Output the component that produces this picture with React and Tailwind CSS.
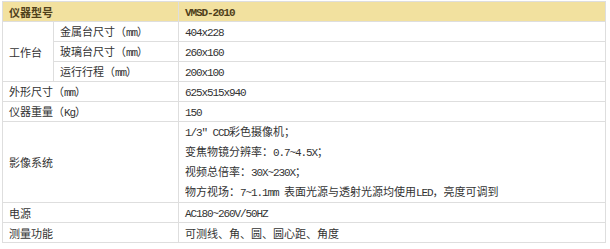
import React from "react";

// ASCII runs are set in a narrow mono face, like SimSun half-width glyphs
function Txt({ children }) {
  const parts = String(children).split(/([\x20-\x7E]+)/);
  return (
    <span>
      {parts.map((p, i) =>
        /^[\x20-\x7E]+$/.test(p) ? (
          <span key={i} className="font-['Liberation_Mono'] tracking-[-1.1px] whitespace-pre">
            {p}
          </span>
        ) : (
          <span key={i}>{p}</span>
        )
      )}
    </span>
  );
}

const cell = "border border-[#dedede] px-[6px] h-[20px] py-0 leading-[12px] align-middle";
const line = "h-[20px] flex items-center leading-[12px]";

export default function App() {
  return (
    <div className="w-[610px] h-[249px] bg-white pt-px pl-[2px] font-['Noto_Sans_CJK_SC',sans-serif] text-[11px] text-[#333]">
      <table className="w-[604px] border-collapse border border-[#dcdcdc] table-fixed">
        <colgroup>
          <col className="w-[51px]" />
          <col className="w-[125px]" />
          <col />
        </colgroup>
        <tbody>
          {/* en-tête */}
          <tr className="bg-[#f2e19f] font-bold text-[#4f401a]">
            <td colSpan={2} className={cell}>
              仪器型号
            </td>
            <td className={cell}>
              <Txt>VMSD-2010</Txt>
            </td>
          </tr>

          <tr>
            <td rowSpan={3} className={cell}>
              工作台
            </td>
            <td className={cell}>
              <Txt>金属台尺寸（mm）</Txt>
            </td>
            <td className={cell}>
              <Txt>404x228</Txt>
            </td>
          </tr>
          <tr>
            <td className={cell}>
              <Txt>玻璃台尺寸（mm）</Txt>
            </td>
            <td className={cell}>
              <Txt>260x160</Txt>
            </td>
          </tr>
          <tr>
            <td className={cell}>
              <Txt>运行行程（mm）</Txt>
            </td>
            <td className={cell}>
              <Txt>200x100</Txt>
            </td>
          </tr>

          <tr>
            <td colSpan={2} className={cell}>
              <Txt>外形尺寸（mm）</Txt>
            </td>
            <td className={cell}>
              <Txt>625x515x940</Txt>
            </td>
          </tr>
          <tr>
            <td colSpan={2} className={cell}>
              <Txt>仪器重量（Kg）</Txt>
            </td>
            <td className={cell}>
              <Txt>150</Txt>
            </td>
          </tr>

          <tr>
            <td colSpan={2} className={cell}>
              影像系统
            </td>
            <td className="border border-[#dedede] px-[6px] py-0">
              <div className={line}>
                <Txt>1/3" CCD彩色摄像机；</Txt>
              </div>
              <div className={line}>
                <Txt>变焦物镜分辨率：0.7~4.5X；</Txt>
              </div>
              <div className={line}>
                <Txt>视频总倍率：30X~230X；</Txt>
              </div>
              <div className={line}>
                <Txt>物方视场：7~1.1mm 表面光源与透射光源均使用LED，亮度可调到</Txt>
              </div>
            </td>
          </tr>

          <tr>
            <td colSpan={2} className={cell}>
              电源
            </td>
            <td className={cell}>
              <Txt>AC180~260V/50HZ</Txt>
            </td>
          </tr>
          <tr>
            <td colSpan={2} className={cell}>
              测量功能
            </td>
            <td className={cell}>
              可测线、角、圆、圆心距、角度
            </td>
          </tr>
        </tbody>
      </table>
    </div>
  );
}
